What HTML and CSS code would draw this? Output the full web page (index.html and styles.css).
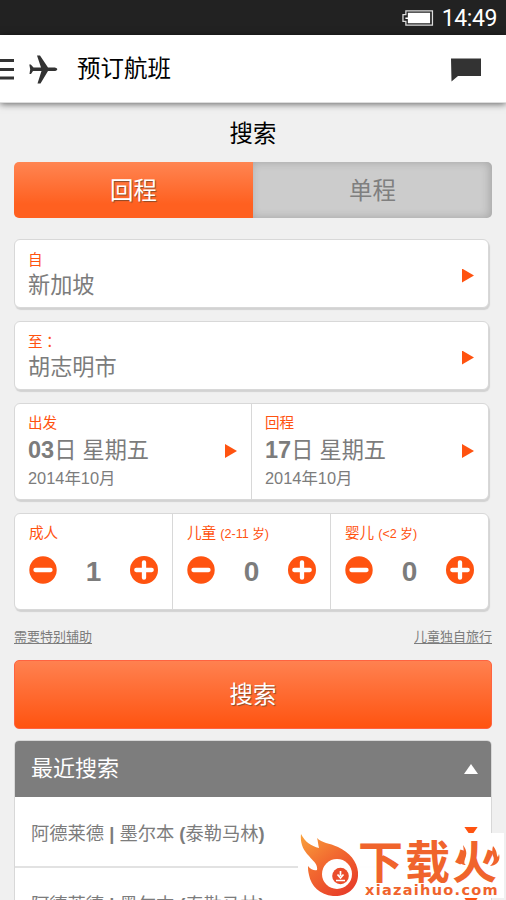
FILE: index.html
```
<!DOCTYPE html>
<html lang="zh-CN">
<head>
<meta charset="utf-8">
<title>预订航班</title>
<link rel="stylesheet" href="styles.css">
</head>
<body>
<div class="status">
  <svg class="battery" width="33" height="18" viewBox="0 0 33 18"><path d="M4 1.600H31.400V16.400H4V12.400H1V5.600H4Z" fill="#222" stroke="#ddd" stroke-width="1.300"/><path d="M6 3.500H29V14.500H6V10H3.500V8.500H6Z" fill="#fff"/></svg>
  <span class="clock">14:49</span>
</div>
<header class="header">
  <svg class="menu" width="14" height="21" viewBox="0 0 14 21"><path d="M0 0H14V3H0ZM0 9H14V12H0ZM0 17.500H14V20.500H0Z" fill="#333"/></svg>
  <svg class="plane" width="29" height="29" viewBox="0 0 29 29"><path d="M8 0.500H11L19 12.500H26C29 13.500 29 15.200 26 16H19L11.500 28.500H8.500L12.500 16H4L2 19H0.500L1.200 14.200L0.300 9.500H1.800L4.500 12.500H12Z" fill="#333"/></svg>
  <h1 class="title">预订航班</h1>
  <svg class="chat" width="30" height="24" viewBox="0 0 30 24"><path d="M0 0.500H30V18H7L0.500 23.500Z" fill="#333"/></svg>
</header>
<main class="main">
  <h2 class="heading">搜索</h2>
  <div class="toggle"><div class="tab active">回程</div><div class="tab">单程</div></div>
  <section class="card place">
    <div><div class="label">自</div><div class="value">新加坡</div></div>
    <i class="arrow"></i>
  </section>
  <section class="card place">
    <div><div class="label">至<span lang="zh-TW">：</span></div><div class="value">胡志明市</div></div>
    <i class="arrow"></i>
  </section>
  <section class="card dates">
    <div class="cell">
      <div><div class="label">出发</div><div class="value"><b>03</b>日 星期五</div><div class="month">2014年10月</div></div>
      <i class="arrow"></i>
    </div>
    <div class="cell">
      <div><div class="label">回程</div><div class="value"><b>17</b>日 星期五</div><div class="month">2014年10月</div></div>
      <i class="arrow"></i>
    </div>
  </section>
  <section class="card people">
    <div class="cell">
      <div class="label">成人</div>
      <div class="stepper"><svg width="28" height="28" viewBox="0 0 28 28"><circle cx="14" cy="14" r="13.700"/><path d="M6.500 14H21.500"/></svg><b>1</b><svg width="28" height="28" viewBox="0 0 28 28"><circle cx="14" cy="14" r="14"/><path d="M6.300 14H21.700M14 6.300V21.700"/></svg></div>
    </div>
    <div class="cell">
      <div class="label">儿童 <small>(2-11 岁)</small></div>
      <div class="stepper"><svg width="28" height="28" viewBox="0 0 28 28"><circle cx="14" cy="14" r="13.700"/><path d="M6.500 14H21.500"/></svg><b>0</b><svg width="28" height="28" viewBox="0 0 28 28"><circle cx="14" cy="14" r="14"/><path d="M6.300 14H21.700M14 6.300V21.700"/></svg></div>
    </div>
    <div class="cell">
      <div class="label">婴儿 <small>(&lt;2 岁)</small></div>
      <div class="stepper"><svg width="28" height="28" viewBox="0 0 28 28"><circle cx="14" cy="14" r="13.700"/><path d="M6.500 14H21.500"/></svg><b>0</b><svg width="28" height="28" viewBox="0 0 28 28"><circle cx="14" cy="14" r="14"/><path d="M6.300 14H21.700M14 6.300V21.700"/></svg></div>
    </div>
  </section>
  <div class="links"><a>需要特别辅助</a><a>儿童独自旅行</a></div>
  <div class="submit">搜索</div>
  <section class="recent">
    <div class="recent-head"><span>最近搜索</span><i class="up"></i></div>
    <div class="row"><span>阿德莱德 <b>|</b> 墨尔本 <b>(</b>泰勒马林<b>)</b></span><i class="down"></i></div>
    <div class="row"><span>阿德莱德 <b>|</b> 墨尔本 <b>(</b>泰勒马林<b>)</b></span><i class="down"></i></div>
  </section>
</main>
<div class="brand">
  <svg class="flame" width="60" height="65" viewBox="0 0 60 65">
    <defs><linearGradient id="fire" x1="0" y1="0" x2="0.700" y2="1"><stop offset="0" stop-color="#f9a23c"/><stop offset="0.500" stop-color="#f26a30"/><stop offset="1" stop-color="#e8402a"/></linearGradient></defs>
    <path d="M3 1C7 9 13 13 21 15C20 11 20 8 19 5C24 10 31 10 40 14C53 20 61 31 60 43C59 56 48 64 35 63C22 62 13 53 11 42C10 38 10 36 10 33C13 37 17 38 19 37C20 31 15 28 11 23C5 17 2 10 3 1Z" fill="url(#fire)"/>
    <circle cx="39" cy="41" r="15" fill="#fff"/>
    <circle cx="42.500" cy="43" r="8.300" fill="#ea4c2b"/>
    <path d="M42.500 38V43M39.500 41.500L42.500 45L45.500 41.500M38 47.500H47" fill="none" stroke="#fff" stroke-width="1.700"/>
  </svg>
  <div class="brand-text">
    <div class="brand-name">下载火</div>
    <div class="brand-url">xiazaihuo.com</div>
  </div>
  <svg class="sparks" width="42" height="22" viewBox="0 0 42 22"><path d="M5 0C9 5 9 9 7 14C6 17 6 19 8 20C1 20-1 14 2 10C2 12 3 13 4 13C6 9 6 5 5 0ZM35 1C40 7 38 10 40 12L41 9C43 16 38 21 32 21C35 18 37 15 35 11C34 8 34 4 35 1Z" fill="#f0642c"/></svg>
</div>
</body>
</html>
```
FILE: styles.css
```
* { box-sizing: border-box; }
body {
  margin: 0;
  height: 900px;
  overflow: hidden;
  position: relative;
  background: #f0f0f0;
  color: #7c7c7c;
  font-family: "Liberation Sans", "Noto Sans CJK SC", sans-serif;
}
h1, h2 { margin: 0; font-weight: 400; }
svg { display: block; flex: none; }
.status {
  height: 35px;
  background: #222;
  display: flex;
  align-items: center;
  justify-content: flex-end;
  gap: 8px;
  padding-right: 9px;
}
.battery { width: 32px; }
.clock { color: #fff; font: 23px/35px Roboto, sans-serif; padding-top: 2px; letter-spacing: -0.4px; }
.header {
  height: 68px;
  background: #fff;
  border-bottom: 1px solid #ddd;
  box-shadow: 0 1px 7px rgba(0, 0, 0, .6);
  display: flex;
  align-items: center;
}
.menu { margin-top: 2px; }
.plane { margin-left: 15px; margin-top: 1px; }
.title { margin-left: 19px; font-size: 23.5px; color: #000; line-height: 66px; }
.chat { margin-left: auto; margin-right: 25px; margin-top: 3px; }
.main { padding: 13px 14px 0; }
.heading { height: 36px; line-height: 36px; font-size: 23.4px; text-align: center; color: #000; }
.toggle {
  margin-top: 10px;
  height: 56px;
  display: flex;
  border-radius: 5px;
  overflow: hidden;
}
.tab {
  flex: 1;
  line-height: 58px;
  text-align: center;
  font-size: 23.4px;
  color: #7f7f7f;
  background: #ccc;
  box-shadow: inset -2px 0 10px rgba(0, 0, 0, .2);
}
.tab.active {
  color: #fff;
  background: linear-gradient(#ff8552, #ff6020 75%, #ff6020);
  box-shadow: none;
  text-shadow: 1px 1px 1px #8a4a28;
}
.card {
  width: 475px;
  background: #fff;
  border: 1px solid #d8d8d8;
  border-radius: 6px;
  box-shadow: 1px 2px 1px #d2d2d2;
}
.label { font-size: 14.6px; line-height: 20px; color: #ff5310; }
.label small { font-size: 12.6px; }
.label [lang="zh-TW"] { font-family: "Noto Sans CJK TC", sans-serif; line-height: 1; }
.value { font-size: 22.2px; line-height: 30px; white-space: nowrap; }
.value b { font-size: 23.5px; }
.month { font-size: 16.4px; line-height: 30px; }
.arrow {
  width: 12px;
  height: 14px;
  background: #ff5310;
  clip-path: polygon(0 0, 100% 50%, 0 100%);
}
.place {
  height: 69px;
  margin-top: 21px;
  padding: 3px 14px 0 13px;
  display: flex;
  align-items: center;
  justify-content: space-between;
}
.place + .place { margin-top: 13px; }
.place .value { padding-top: 1px; }
.place .arrow { margin-top: 1px; }
.dates { height: 97px; margin-top: 13px; display: flex; }
.dates .cell {
  flex: 1;
  padding: 9px 14px 0 13px;
  display: flex;
  justify-content: space-between;
}
.dates .value { padding-top: 2px; height: 30px; }
.dates .arrow { margin-top: 31px; }
.cell + .cell { border-left: 1px solid #d8d8d8; }
.people { height: 97px; margin-top: 13px; display: flex; }
.people .cell { flex: 1; height: 95px; padding: 9px 14px 0; }
.people .label { height: 20px; }
.stepper { display: flex; justify-content: space-between; align-items: center; margin-top: 13px; height: 28px; }
.stepper b { font-size: 28px; line-height: 28px; padding-top: 3px; }
.stepper circle { fill: #ff5310; }
.stepper path { stroke: #fff; stroke-width: 4.3px; stroke-linecap: round; }
.links { margin-top: 16px; display: flex; justify-content: space-between; font-size: 13px; line-height: 22px; height: 22px; }
.links a { text-decoration: underline; text-underline-offset: 2px; text-decoration-thickness: 1px; }
.submit {
  margin-top: 12px;
  height: 69px;
  line-height: 69px;
  border: 1px solid #ff6340;
  border-radius: 5px;
  background: linear-gradient(#ff8150, #ff5310);
  color: #fff;
  text-align: center;
  font-size: 23.4px;
  text-shadow: 1px 1px 1px #8a4a28;
}
.recent {
  margin-top: 11px;
  border: 1px solid #d8d8d8;
  border-radius: 5px 5px 0 0;
  background: #fff;
  overflow: hidden;
}
.recent-head {
  height: 56px;
  padding: 0 13px 0 16px;
  background: #7d7d7d;
  color: #fff;
  font-size: 22px;
  line-height: 50px;
  display: flex;
  justify-content: space-between;
}
.recent-head span { margin-top: 3px; }
.up { width: 14px; height: 10px; margin-top: 23px; background: #fff; clip-path: polygon(50% 0, 100% 100%, 0 100%); }
.row {
  height: 71px;
  padding: 0 13px 0 16px;
  border-bottom: 2px solid #e2e2e2;
  display: flex;
  align-items: center;
  justify-content: space-between;
  font-size: 18.3px;
}
.down { width: 14px; height: 10px; background: #ff5310; clip-path: polygon(0 0, 100% 0, 50% 100%); }
.brand {
  position: absolute;
  left: 298px;
  top: 833px;
  width: 206px;
  height: 65px;
  background: rgba(255, 255, 255, .97);
  display: flex;
}
.brand-text { color: #f0642c; white-space: nowrap; }
.brand-name { font: 700 45px/44px "Noto Sans CJK SC", sans-serif; letter-spacing: 2px; height: 50px; padding-top: 5px; }
.brand-url { font: 700 14.5px/14px "DejaVu Sans", sans-serif; padding-left: 7px; letter-spacing: 1.3px; }
.sparks { position: absolute; right: 4px; top: 12px; }
```
